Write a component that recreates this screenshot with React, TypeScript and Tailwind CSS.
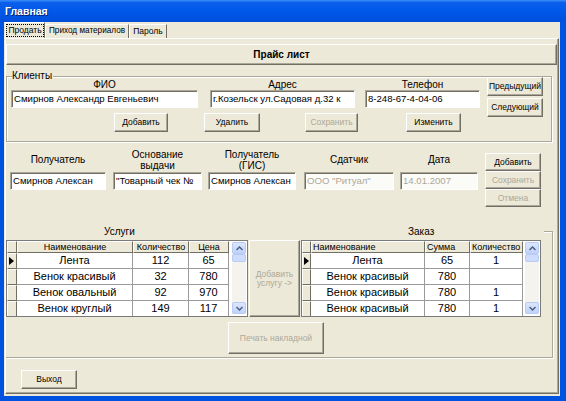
import React from "react";

const btn =
  "bg-[#ECE9D8] border border-t-white border-l-white border-r-[#716F64] border-b-[#716F64] shadow-[inset_-1px_-1px_0_#ACA899] flex items-center justify-center text-[8.5px] leading-none whitespace-nowrap shrink-0";
const inputCls =
  "border border-t-[#ACA899] border-l-[#ACA899] border-r-white border-b-white shadow-[inset_1px_1px_0_#716F64] flex items-center pl-[2px] text-[9.6px] leading-none whitespace-nowrap overflow-hidden shrink-0";
const cell3d =
  "bg-[#ECE9D8] border border-t-white border-l-white border-r-[#716F64] border-b-[#716F64] shrink-0";

function ScrollBtn({ up }: { up?: boolean }) {
  return (
    <div className="h-[12px] w-full rounded-[2px] border border-[#B8CBF5] bg-[linear-gradient(to_bottom,#DCE6FD,#C1D3FB)] flex items-center justify-center">
      <svg width="7" height="5" viewBox="0 0 7 5">
        {up ? (
          <polyline points="0.5,4 3.5,1 6.5,4" fill="none" stroke="#4D6185" strokeWidth="1.5" />
        ) : (
          <polyline points="0.5,1 3.5,4 6.5,1" fill="none" stroke="#4D6185" strokeWidth="1.5" />
        )}
      </svg>
    </div>
  );
}

function ScrollBar() {
  return (
    <div className="w-[16px] shrink-0 bg-white px-[1px] pt-[1px] pb-[2px] flex flex-col">
      <div className="flex-1 flex flex-col bg-[#F4F3EE]">
        <ScrollBtn up />
        <div className="h-[8px] rounded-[2px] border border-[#B8CBF5] bg-[#CEDCFC]" />
        <div className="flex-1" />
        <ScrollBtn />
      </div>
    </div>
  );
}

function Arrow() {
  return (
    <svg width="5" height="8" viewBox="0 0 5 8">
      <path d="M0 0 L5 4 L0 8 Z" fill="#000" />
    </svg>
  );
}

type Col = { w: string; label: string; left?: boolean };

function Grid({
  cols,
  rows,
  ind,
  width,
}: {
  cols: Col[];
  rows: string[][];
  ind: string;
  width: string;
}) {
  return (
    <div className={`${width} h-[77px] shrink-0 border border-[#7A7A7A] bg-white flex overflow-hidden`}>
      <div className="flex-1 flex flex-col">
        <div className="flex h-[12px] shrink-0">
          <div className={`${cell3d} ${ind}`} />
          {cols.map((c, i) => (
            <div
              key={i}
              className={`${cell3d} ${c.w} flex items-center ${c.left ? "justify-start pl-[1px]" : "justify-center"} text-[9px] leading-none overflow-hidden whitespace-nowrap`}
            >
              {c.label}
            </div>
          ))}
          <div className="flex-1 bg-white" />
        </div>
        {rows.map((r, ri) => (
          <div key={ri} className="flex h-[16px] shrink-0">
            <div className={`${cell3d} ${ind} flex items-center pl-[1px]`}>{ri === 0 ? <Arrow /> : null}</div>
            {cols.map((c, i) => (
              <div
                key={i}
                className={`${c.w} shrink-0 border-r border-b border-[#9A9A9A] flex items-center justify-center text-[11px] leading-none whitespace-nowrap overflow-hidden`}
              >
                {r[i]}
              </div>
            ))}
            <div className="flex-1 bg-white" />
          </div>
        ))}
      </div>
      <ScrollBar />
    </div>
  );
}

function Labeled({
  label,
  w,
  h,
  value,
  disabled,
  gap,
}: {
  label: React.ReactNode;
  w: string;
  h: string;
  value: string;
  disabled?: boolean;
  gap: string;
}) {
  return (
    <div className={`flex flex-col ${w} ${gap} shrink-0`}>
      <div className={`${h} flex items-center justify-center text-center text-[10px] leading-[11px]`}>{label}</div>
      <div
        className={`${inputCls} ${w} ${disabled ? "bg-[#FBFBF8] text-[#ACA899]" : "bg-white text-black"} h-[18px]`}
      >
        {value}
      </div>
    </div>
  );
}

export default function App() {
  return (
    <div className="w-[566px] h-[401px] flex flex-col bg-[#0053E1] font-['Liberation_Sans',Arial,sans-serif] text-black overflow-hidden">
      {/* title bar */}
      <div className="h-[22px] shrink-0 bg-[linear-gradient(to_bottom,#3D8EF8_0%,#0A5EEB_12%,#0058E8_55%,#004DDA_100%)] flex items-center pl-[5px]">
        <span className="text-white font-bold text-[10.5px] leading-none [text-shadow:1px_1px_0_#0A2170]">Главная</span>
      </div>
      {/* client area */}
      <div className="flex-1 ml-[4px] mr-[6px] mb-[5px] bg-[#ECE9D8] flex flex-col">
        {/* tabs */}
        <div className="h-[16px] shrink-0 flex items-end pl-[1px]">
          <div className="w-[40px] h-[16px] border border-b-0 border-t-white border-l-white border-r-[#716F64] flex items-center justify-center">
            <span className="border border-dotted border-black px-[1px] h-[13px] flex items-center text-[8.5px] leading-none">
              Продать
            </span>
          </div>
          <div className="w-[84px] h-[14px] border border-b-0 border-t-white border-l-white border-r-[#716F64] flex items-center justify-center text-[8.2px] leading-none whitespace-nowrap">
            Приход материалов
          </div>
          <div className="w-[38px] h-[14px] border border-b-0 border-t-white border-l-white border-r-[#716F64] flex items-center justify-center text-[8.5px] leading-none">
            Пароль
          </div>
        </div>
        {/* tab panel */}
        <div className="h-[356px] shrink-0 ml-[1px] mr-[1px] border border-t-white border-l-white border-r-[#716F64] border-b-[#716F64] shadow-[inset_-1px_-1px_0_#ACA899] flex flex-col">
          {/* price list */}
          <div className={`${btn} w-[551px] h-[21px] mt-[5px] font-bold text-[10px]`}>Прайс лист</div>

          {/* clients group */}
          <div className="relative w-[546px] h-[66px] mt-[11px] border border-[#ACA899] shadow-[inset_1px_1px_0_white,1px_1px_0_white] flex shrink-0">
            <span className="absolute -top-[6px] left-[5px] bg-[#ECE9D8] text-[10px] leading-[10px] pr-[1px]">
              Клиенты
            </span>
            <div className="flex flex-col pl-[4px] pt-[1px]">
              <div className="flex">
                <Labeled gap="" label="ФИО" w="w-[187px]" h="h-[12px]" value="Смирнов Александр Евгеньевич" />
                <Labeled gap="ml-[12px]" label="Адрес" w="w-[145px]" h="h-[12px]" value="г.Козельск ул.Садовая д.32 к" />
                <Labeled gap="ml-[10px]" label="Телефон" w="w-[115px]" h="h-[12px]" value="8-248-67-4-04-06" />
              </div>
              <div className="flex mt-[5px]">
                <div className={`${btn} w-[54px] h-[19px] ml-[103px]`}>Добавить</div>
                <div className={`${btn} w-[56px] h-[19px] ml-[36px]`}>Удалить</div>
                <div className={`${btn} w-[53px] h-[19px] ml-[45px] text-[#ACA899]`}>Сохранить</div>
                <div className={`${btn} w-[55px] h-[19px] ml-[48px]`}>Изменить</div>
              </div>
            </div>
            <div className="flex flex-col ml-[7px]">
              <div className={`${btn} w-[56px] h-[19px]`}>Предыдущий</div>
              <div className={`${btn} w-[56px] h-[19px] mt-[2px]`}>Следующий</div>
            </div>
          </div>

          {/* receiver section */}
          <div className="flex mt-[5px] ml-[4px] shrink-0">
            <Labeled gap="" label="Получатель" w="w-[96px]" h="h-[25px]" value="Смирнов Алексан" />
            <Labeled
              gap="ml-[7px]"
              label={<>Основание<br />выдачи</>}
              w="w-[89px]"
              h="h-[25px]"
              value={'"Товарный чек №'}
            />
            <Labeled
              gap="ml-[6px]"
              label={<>Получатель<br />(ГИС)</>}
              w="w-[88px]"
              h="h-[25px]"
              value="Смирнов Алексан"
            />
            <Labeled gap="ml-[8px]" label="Сдатчик" w="w-[90px]" h="h-[25px]" value={'ООО "Ритуал"'} disabled />
            <Labeled gap="ml-[6px]" label="Дата" w="w-[78px]" h="h-[25px]" value="14.01.2007" disabled />
            <div className="flex flex-col ml-[7px] mt-[6px]">
              <div className={`${btn} w-[56px] h-[18px]`}>Добавить</div>
              <div className={`${btn} w-[56px] h-[18px] text-[#ACA899]`}>Сохранить</div>
              <div className={`${btn} w-[56px] h-[18px] text-[#ACA899]`}>Отмена</div>
            </div>
          </div>

          {/* order group */}
          <div className="w-[547px] h-[127px] mt-[24px] border-r border-b border-[#ACA899] shadow-[1px_1px_0_white] flex flex-col shrink-0">
            <div className="h-[9px] flex shrink-0">
              <div className="w-[242px] shrink-0">
                <div className="-mt-[4px] ml-[98px] text-[10px] leading-[10px]">Услуги</div>
              </div>
              <div className="w-[53px] shrink-0" />
              <div className="w-[241px] shrink-0">
                <div className="-mt-[4px] ml-[107px] text-[10px] leading-[10px]">Заказ</div>
              </div>
              <div className="flex-1 ml-[2px] border-t border-[#ACA899] shadow-[inset_0_1px_0_white]" />
            </div>
            <div className="flex h-[77px] shrink-0">
              <Grid
                width="w-[242px]"
                ind="w-[10px]"
                cols={[
                  { w: "w-[116px]", label: "Наименование" },
                  { w: "w-[56px]", label: "Количество" },
                  { w: "w-[40px]", label: "Цена" },
                ]}
                rows={[
                  ["Лента", "112", "65"],
                  ["Венок красивый", "32", "780"],
                  ["Венок овальный", "92", "970"],
                  ["Венок круглый", "149", "117"],
                ]}
              />
              <div className={`${btn} w-[51px] h-[77px] ml-[1px] flex-col text-[#ACA899] leading-[12px]`}>
                <span>Добавить</span>
                <span>услугу -&gt;</span>
              </div>
              <div className="ml-[1px]">
                <Grid
                  width="w-[240px]"
                  ind="w-[9px]"
                  cols={[
                    { w: "w-[114px]", label: "Наименование", left: true },
                    { w: "w-[45px]", label: "Сумма", left: true },
                    { w: "w-[53px]", label: "Количество", left: true },
                  ]}
                  rows={[
                    ["Лента", "65", "1"],
                    ["Венок красивый", "780", ""],
                    ["Венок красивый", "780", "1"],
                    ["Венок красивый", "780", "1"],
                  ]}
                />
              </div>
            </div>
            <div className={`${btn} w-[96px] h-[32px] mt-[5px] ml-[222px] text-[#ACA899]`}>Печать накладной</div>
          </div>

          {/* exit */}
          <div className={`${btn} w-[56px] h-[19px] mt-[12px] ml-[15px]`}>Выход</div>
        </div>
      </div>
    </div>
  );
}
